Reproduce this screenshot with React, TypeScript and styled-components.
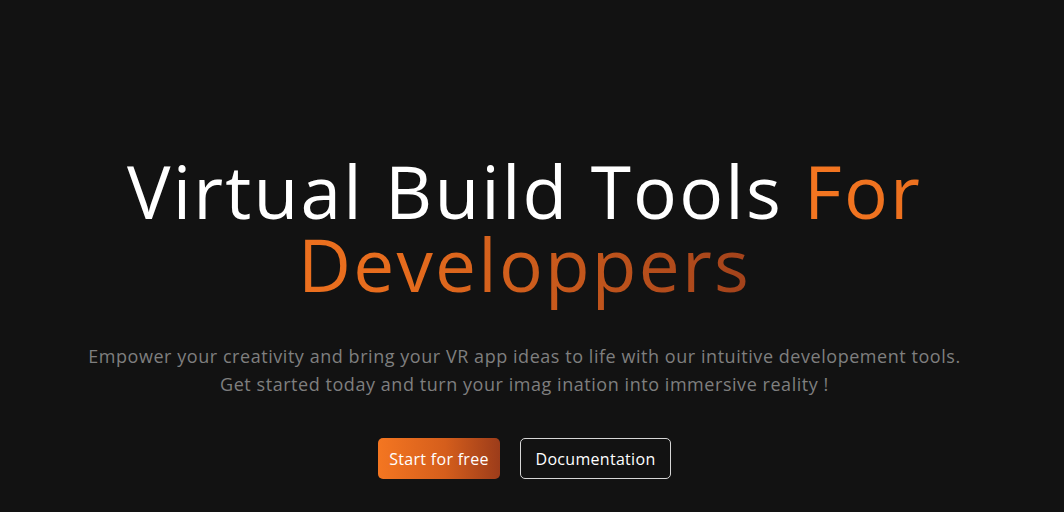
import React from "react";
import styled, { createGlobalStyle } from "styled-components";

const Global = createGlobalStyle`
  html, body { margin: 0; padding: 0; background: #121212; }
  body { font-family: "Open Sans", "Liberation Sans", sans-serif; }
`;

const Hero = styled.section`
  display: flex;
  flex-direction: column;
  align-items: center;
  padding: 154px 15px 0 0;
  height: 512px;
  box-sizing: border-box;
  text-align: center;
`;

const Title = styled.h1`
  margin: 0;
  font-family: "Open Sans", sans-serif;
  font-weight: 400;
  font-size: 73px;
  line-height: 73px;
  color: #ffffff;
  letter-spacing: 2.2px;
`;

const Accent = styled.span`
  background: linear-gradient(90deg, #f47621 0%, #e56b1d 40%, #a2421b 100%);
  -webkit-background-clip: text;
  background-clip: text;
  color: transparent;
`;

const Subtitle = styled.p`
  margin: 42px 0 0;
  font-size: 18px;
  line-height: 28px;
  color: #7f7f7f;
  letter-spacing: 0.55px;
`;

const Actions = styled.div`
  display: flex;
  gap: 20px;
  margin-top: 40px;
`;

const Button = styled.button<{ $primary?: boolean; $width: number }>`
  width: ${(p) => p.$width}px;
  height: 41px;
  padding: 0;
  border-radius: 5px;
  font-family: "Open Sans", sans-serif;
  font-size: 16px;
  font-weight: 500;
  letter-spacing: 0.3px;
  color: #ffffff;
  cursor: pointer;
  border: ${(p) => (p.$primary ? "none" : "1px solid #d6d6d6")};
  background: ${(p) =>
    p.$primary ? "linear-gradient(90deg, #f47621 0%, #d55e1c 55%, #9c3c1a 100%)" : "transparent"};
`;

export default function App() {
  return (
    <>
      <Global />
      <Hero>
        <Title>
          Virtual Build Tools <Accent>For<br />Developpers</Accent>
        </Title>
        <Subtitle>
          Empower your creativity and bring your VR app ideas to life with our intuitive developement tools.
          <br />
          Get started today and turn your imag ination into immersive reality !
        </Subtitle>
        <Actions>
          <Button $primary $width={122}>Start for free</Button>
          <Button $width={151}>Documentation</Button>
        </Actions>
      </Hero>
    </>
  );
}
